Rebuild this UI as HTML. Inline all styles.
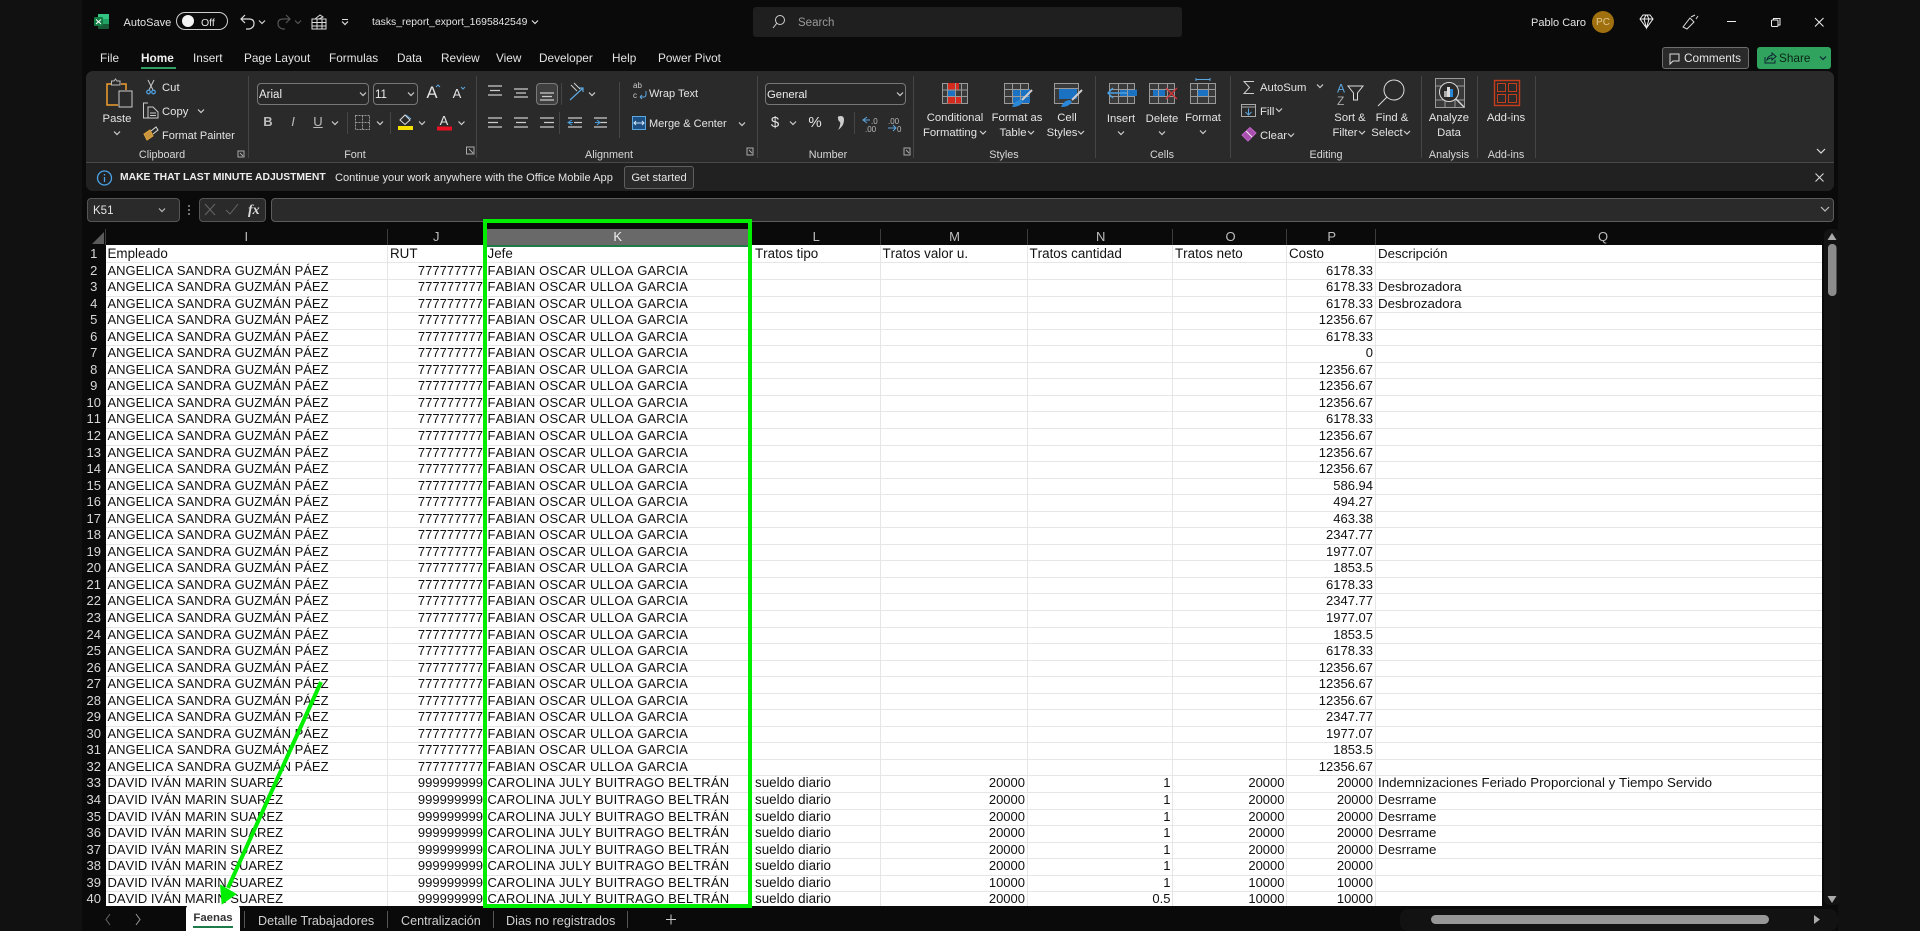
<!DOCTYPE html>
<html lang="en"><head><meta charset="utf-8"><title>tasks_report_export_1695842549 - Excel</title>
<style>
*{box-sizing:border-box}
html,body{margin:0;padding:0;width:1920px;height:931px;overflow:hidden;background:#111;font-family:"Liberation Sans",sans-serif}
#w{position:absolute;left:82px;top:0;width:1756px;height:931px;background:#0a0a0a}
.b{position:absolute}
.t{position:absolute;white-space:nowrap;font-size:11.3px;line-height:14px;color:#e4e4e4}
.c{transform:translateX(-50%)}
.m{font-size:11.8px;color:#e4e4e4}
.l{font-size:10.8px;color:#d8d8d8;top:148px}
.sel{background:#282828;border:1px solid #777;border-radius:4px}
#g{position:absolute;left:82px;top:228.7px;width:1740px;overflow:hidden;font-kerning:none}
#hd,.r{display:grid;grid-template-columns:23.5px 282.5px 97.5px 265.5px 129.5px 147px 145.5px 114px 88.5px 454px}
#hd{height:16.3px;background:#0a0a0a}
#hd span{font-size:13px;line-height:16px;text-align:center;color:#bdbdbd;border-right:1px solid #3c3c3c}
#hd span:nth-child(n+5){padding-left:2px}
#hd span:nth-child(4){background:#696969;color:#eee;border-bottom:2px solid #1f7a4a}
.r{height:16.55px;background:#fff}
.r span{font-size:13px;line-height:17.5px;color:#111;padding:0 2px;white-space:nowrap;border-right:1px solid #e6e6e6;border-bottom:1px solid #e6e6e6;overflow:visible}
.r span:nth-child(1){background:#0a0a0a;color:#d8d8d8;text-align:center;padding:0;border:0}
.r span:nth-child(3),.r span:nth-child(6),.r span:nth-child(7),.r span:nth-child(8),.r span:nth-child(9){text-align:right;padding-right:1.5px}
.r span:nth-child(4){letter-spacing:.16px}
.r span:nth-child(5){padding-left:4px;font-size:13.4px}
.r span:nth-child(10){padding-left:2.5px;font-size:13.3px}
.h span{font-size:13.4px}
.h span:nth-child(1){font-size:13px}
.h span:nth-child(4){letter-spacing:0}
.h span:nth-child(3),.h span:nth-child(6),.h span:nth-child(7),.h span:nth-child(8),.h span:nth-child(9){text-align:left;padding-left:2px;font-size:13.4px}
#ov{position:absolute;left:0;top:0;width:1920px;height:931px;pointer-events:none}
</style></head><body>
<div id="w"></div>

<div class="b" style="left:86px;top:71px;width:1748px;height:120px;background:#2a2a2a;border-radius:7px"></div>
<div class="b" style="left:86px;top:162px;width:1748px;height:29px;background:#212121;border-top:1.5px solid #484848;border-radius:0 0 7px 7px"></div>
<div class="b" style="left:753px;top:7px;width:429px;height:30px;background:#1f1f1f;border-radius:3px"></div>
<div class="b" style="left:176px;top:12px;width:52px;height:18px;border:1px solid #cfcfcf;border-radius:9px"></div>
<div class="b" style="left:182px;top:15px;width:12px;height:12px;background:#f4f4f4;border-radius:50%"></div>
<div class="b" style="left:1592px;top:11px;width:22px;height:22px;background:#a0700f;border-radius:50%"></div>
<div class="b" style="left:1662px;top:47px;width:87px;height:22px;background:#2a2a2a;border:1px solid #6e6e6e;border-radius:3px"></div>
<div class="b" style="left:1757px;top:47px;width:74px;height:22px;background:#30a45f;border-radius:3px"></div>
<div class="b" style="left:141px;top:67px;width:35px;height:2px;background:#2f9e63"></div>

<div class="b sel" style="left:257px;top:83px;width:112px;height:22px"></div>
<div class="b sel" style="left:373px;top:83px;width:45px;height:22px"></div>
<div class="b" style="left:536px;top:83px;width:21.500px;height:22px;background:#3f3f3f;border:1px solid #7a7a7a;border-radius:4px"></div>
<div class="b sel" style="left:765px;top:83px;width:141px;height:22px"></div>
<div class="b" style="left:624px;top:166px;width:70px;height:23px;background:#2a2a2a;border:1px solid #5f5f5f;border-radius:3px"></div>

<div class="b" style="left:87px;top:198px;width:93px;height:24px;background:#2a2a2a;border:1px solid #555;border-radius:4px"></div>
<div class="b" style="left:199px;top:198px;width:67px;height:24px;background:#2a2a2a;border:1px solid #555;border-radius:4px"></div>
<div class="b" style="left:271px;top:198px;width:1563px;height:24px;background:#2a2a2a;border:1px solid #5c5c5c;border-radius:4px"></div>

<!-- title bar text -->
<span class="t" style="left:123.500px;top:16px;font-size:11px">AutoSave</span>
<span class="t" style="left:201px;top:16px;font-size:10.5px">Off</span>
<span class="t" style="left:372px;top:16px;font-size:10.4px">tasks_report_export_1695842549</span>
<span class="t" style="left:798px;top:16px;color:#9a9a9a;font-size:11.5px">Search</span>
<span class="t" style="left:1531px;top:16px;font-size:11px">Pablo Caro</span>
<span class="t c" style="left:1603px;top:16px;font-size:10px;color:#e0c890">PC</span>

<!-- tabs -->
<span class="t m" style="left:100px;top:51px">File</span>
<span class="t m" style="left:141px;top:51px;font-weight:bold;color:#f0f0f0">Home</span>
<span class="t m" style="left:193px;top:51px">Insert</span>
<span class="t m" style="left:244px;top:51px">Page Layout</span>
<span class="t m" style="left:329px;top:51px">Formulas</span>
<span class="t m" style="left:397px;top:51px">Data</span>
<span class="t m" style="left:441px;top:51px">Review</span>
<span class="t m" style="left:496px;top:51px">View</span>
<span class="t m" style="left:539px;top:51px">Developer</span>
<span class="t m" style="left:612px;top:51px">Help</span>
<span class="t m" style="left:658px;top:51px">Power Pivot</span>
<span class="t m" style="left:1684px;top:51px">Comments</span>
<span class="t m" style="left:1779px;top:51px;color:#0c2415">Share</span>

<!-- clipboard -->
<span class="t c" style="left:117px;top:112px">Paste</span>
<span class="t" style="left:162px;top:81px">Cut</span>
<span class="t" style="left:162px;top:105px">Copy</span>
<span class="t" style="left:162px;top:129px;font-size:11px">Format Painter</span>
<span class="t c l" style="left:162px">Clipboard</span>
<!-- font -->
<span class="t" style="left:259px;top:88px;color:#eee;font-size:11.5px">Arial</span>
<span class="t" style="left:375px;top:88px;color:#eee;font-size:11.5px">11</span>
<span class="t c" style="left:432px;top:84px;font-size:16.500px;line-height:18px">A</span>
<span class="t c" style="left:457px;top:86px;font-size:13px;line-height:16px">A</span>
<span class="t c" style="left:268px;top:115px;font-size:13px;font-weight:bold;color:#bbb">B</span>
<span class="t c" style="left:293px;top:115px;font-size:13px;font-style:italic;color:#bbb">I</span>
<span class="t c" style="left:318px;top:115px;font-size:13px;text-decoration:underline;color:#bbb">U</span>
<span class="t c" style="left:444px;top:114px;font-size:13px">A</span>
<span class="t c l" style="left:355px">Font</span>
<!-- alignment -->
<span class="t" style="left:649px;top:87px;font-size:11px">Wrap Text</span>
<span class="t" style="left:649px;top:117px;font-size:11px">Merge &amp; Center</span>
<span class="t c l" style="left:609px">Alignment</span>
<!-- number -->
<span class="t" style="left:767px;top:88px;font-size:11.3px;color:#eee">General</span>
<span class="t c" style="left:775px;top:114px;font-size:15px;line-height:18px">$</span>
<span class="t c" style="left:815px;top:114px;font-size:15px;line-height:18px">%</span>
<span class="t c l" style="left:828px">Number</span>
<!-- styles -->
<span class="t c" style="left:955px;top:111px">Conditional</span>
<span class="t c" style="left:950px;top:126px">Formatting</span>
<span class="t c" style="left:1017px;top:111px">Format as</span>
<span class="t c" style="left:1013px;top:126px">Table</span>
<span class="t c" style="left:1067px;top:111px">Cell</span>
<span class="t c" style="left:1062px;top:126px">Styles</span>
<span class="t c l" style="left:1004px">Styles</span>
<!-- cells -->
<span class="t c" style="left:1121px;top:112px">Insert</span>
<span class="t c" style="left:1162px;top:112px">Delete</span>
<span class="t c" style="left:1203px;top:111px">Format</span>
<span class="t c l" style="left:1162px">Cells</span>
<!-- editing -->
<span class="t" style="left:1260px;top:81px">AutoSum</span>
<span class="t" style="left:1260px;top:105px">Fill</span>
<span class="t" style="left:1260px;top:129px">Clear</span>
<span class="t c" style="left:1350px;top:111px">Sort &amp;</span>
<span class="t c" style="left:1345px;top:126px">Filter</span>
<span class="t c" style="left:1392px;top:111px">Find &amp;</span>
<span class="t c" style="left:1387px;top:126px">Select</span>
<span class="t c l" style="left:1326px">Editing</span>
<span class="t c" style="left:1449px;top:111px">Analyze</span>
<span class="t c" style="left:1449px;top:126px">Data</span>
<span class="t c l" style="left:1449px">Analysis</span>
<span class="t c" style="left:1506px;top:111px">Add-ins</span>
<span class="t c l" style="left:1506px">Add-ins</span>

<!-- message bar -->
<span class="t" style="left:120px;top:171px;font-size:10.35px;font-weight:bold;color:#eee">MAKE THAT LAST MINUTE ADJUSTMENT</span>
<span class="t" style="left:335px;top:171px;font-size:11.1px">Continue your work anywhere with the Office Mobile App</span>
<span class="t c" style="left:659px;top:171px;font-size:11.2px">Get started</span>

<!-- formula bar -->
<span class="t" style="left:93px;top:204px;font-size:11.5px">K51</span>
<span class="t" style="left:248px;top:202px;font-size:14px;line-height:17px;font-family:'Liberation Serif',serif;font-style:italic;font-weight:bold;color:#ddd">fx</span>

<!-- grid -->
<div id="g">
<div id="hd"><span></span><span>I</span><span>J</span><span>K</span><span>L</span><span>M</span><span>N</span><span>O</span><span>P</span><span>Q</span></div>
<div class="r h"><span>1</span><span>Empleado</span><span>RUT</span><span>Jefe</span><span>Tratos tipo</span><span>Tratos valor u.</span><span>Tratos cantidad</span><span>Tratos neto</span><span>Costo</span><span>Descripción</span></div>
<div class="r"><span>2</span><span>ANGELICA SANDRA GUZMÁN PÁEZ</span><span>777777777</span><span>FABIAN OSCAR ULLOA GARCIA</span><span></span><span></span><span></span><span></span><span>6178.33</span><span></span></div>
<div class="r"><span>3</span><span>ANGELICA SANDRA GUZMÁN PÁEZ</span><span>777777777</span><span>FABIAN OSCAR ULLOA GARCIA</span><span></span><span></span><span></span><span></span><span>6178.33</span><span>Desbrozadora</span></div>
<div class="r"><span>4</span><span>ANGELICA SANDRA GUZMÁN PÁEZ</span><span>777777777</span><span>FABIAN OSCAR ULLOA GARCIA</span><span></span><span></span><span></span><span></span><span>6178.33</span><span>Desbrozadora</span></div>
<div class="r"><span>5</span><span>ANGELICA SANDRA GUZMÁN PÁEZ</span><span>777777777</span><span>FABIAN OSCAR ULLOA GARCIA</span><span></span><span></span><span></span><span></span><span>12356.67</span><span></span></div>
<div class="r"><span>6</span><span>ANGELICA SANDRA GUZMÁN PÁEZ</span><span>777777777</span><span>FABIAN OSCAR ULLOA GARCIA</span><span></span><span></span><span></span><span></span><span>6178.33</span><span></span></div>
<div class="r"><span>7</span><span>ANGELICA SANDRA GUZMÁN PÁEZ</span><span>777777777</span><span>FABIAN OSCAR ULLOA GARCIA</span><span></span><span></span><span></span><span></span><span>0</span><span></span></div>
<div class="r"><span>8</span><span>ANGELICA SANDRA GUZMÁN PÁEZ</span><span>777777777</span><span>FABIAN OSCAR ULLOA GARCIA</span><span></span><span></span><span></span><span></span><span>12356.67</span><span></span></div>
<div class="r"><span>9</span><span>ANGELICA SANDRA GUZMÁN PÁEZ</span><span>777777777</span><span>FABIAN OSCAR ULLOA GARCIA</span><span></span><span></span><span></span><span></span><span>12356.67</span><span></span></div>
<div class="r"><span>10</span><span>ANGELICA SANDRA GUZMÁN PÁEZ</span><span>777777777</span><span>FABIAN OSCAR ULLOA GARCIA</span><span></span><span></span><span></span><span></span><span>12356.67</span><span></span></div>
<div class="r"><span>11</span><span>ANGELICA SANDRA GUZMÁN PÁEZ</span><span>777777777</span><span>FABIAN OSCAR ULLOA GARCIA</span><span></span><span></span><span></span><span></span><span>6178.33</span><span></span></div>
<div class="r"><span>12</span><span>ANGELICA SANDRA GUZMÁN PÁEZ</span><span>777777777</span><span>FABIAN OSCAR ULLOA GARCIA</span><span></span><span></span><span></span><span></span><span>12356.67</span><span></span></div>
<div class="r"><span>13</span><span>ANGELICA SANDRA GUZMÁN PÁEZ</span><span>777777777</span><span>FABIAN OSCAR ULLOA GARCIA</span><span></span><span></span><span></span><span></span><span>12356.67</span><span></span></div>
<div class="r"><span>14</span><span>ANGELICA SANDRA GUZMÁN PÁEZ</span><span>777777777</span><span>FABIAN OSCAR ULLOA GARCIA</span><span></span><span></span><span></span><span></span><span>12356.67</span><span></span></div>
<div class="r"><span>15</span><span>ANGELICA SANDRA GUZMÁN PÁEZ</span><span>777777777</span><span>FABIAN OSCAR ULLOA GARCIA</span><span></span><span></span><span></span><span></span><span>586.94</span><span></span></div>
<div class="r"><span>16</span><span>ANGELICA SANDRA GUZMÁN PÁEZ</span><span>777777777</span><span>FABIAN OSCAR ULLOA GARCIA</span><span></span><span></span><span></span><span></span><span>494.27</span><span></span></div>
<div class="r"><span>17</span><span>ANGELICA SANDRA GUZMÁN PÁEZ</span><span>777777777</span><span>FABIAN OSCAR ULLOA GARCIA</span><span></span><span></span><span></span><span></span><span>463.38</span><span></span></div>
<div class="r"><span>18</span><span>ANGELICA SANDRA GUZMÁN PÁEZ</span><span>777777777</span><span>FABIAN OSCAR ULLOA GARCIA</span><span></span><span></span><span></span><span></span><span>2347.77</span><span></span></div>
<div class="r"><span>19</span><span>ANGELICA SANDRA GUZMÁN PÁEZ</span><span>777777777</span><span>FABIAN OSCAR ULLOA GARCIA</span><span></span><span></span><span></span><span></span><span>1977.07</span><span></span></div>
<div class="r"><span>20</span><span>ANGELICA SANDRA GUZMÁN PÁEZ</span><span>777777777</span><span>FABIAN OSCAR ULLOA GARCIA</span><span></span><span></span><span></span><span></span><span>1853.5</span><span></span></div>
<div class="r"><span>21</span><span>ANGELICA SANDRA GUZMÁN PÁEZ</span><span>777777777</span><span>FABIAN OSCAR ULLOA GARCIA</span><span></span><span></span><span></span><span></span><span>6178.33</span><span></span></div>
<div class="r"><span>22</span><span>ANGELICA SANDRA GUZMÁN PÁEZ</span><span>777777777</span><span>FABIAN OSCAR ULLOA GARCIA</span><span></span><span></span><span></span><span></span><span>2347.77</span><span></span></div>
<div class="r"><span>23</span><span>ANGELICA SANDRA GUZMÁN PÁEZ</span><span>777777777</span><span>FABIAN OSCAR ULLOA GARCIA</span><span></span><span></span><span></span><span></span><span>1977.07</span><span></span></div>
<div class="r"><span>24</span><span>ANGELICA SANDRA GUZMÁN PÁEZ</span><span>777777777</span><span>FABIAN OSCAR ULLOA GARCIA</span><span></span><span></span><span></span><span></span><span>1853.5</span><span></span></div>
<div class="r"><span>25</span><span>ANGELICA SANDRA GUZMÁN PÁEZ</span><span>777777777</span><span>FABIAN OSCAR ULLOA GARCIA</span><span></span><span></span><span></span><span></span><span>6178.33</span><span></span></div>
<div class="r"><span>26</span><span>ANGELICA SANDRA GUZMÁN PÁEZ</span><span>777777777</span><span>FABIAN OSCAR ULLOA GARCIA</span><span></span><span></span><span></span><span></span><span>12356.67</span><span></span></div>
<div class="r"><span>27</span><span>ANGELICA SANDRA GUZMÁN PÁEZ</span><span>777777777</span><span>FABIAN OSCAR ULLOA GARCIA</span><span></span><span></span><span></span><span></span><span>12356.67</span><span></span></div>
<div class="r"><span>28</span><span>ANGELICA SANDRA GUZMÁN PÁEZ</span><span>777777777</span><span>FABIAN OSCAR ULLOA GARCIA</span><span></span><span></span><span></span><span></span><span>12356.67</span><span></span></div>
<div class="r"><span>29</span><span>ANGELICA SANDRA GUZMÁN PÁEZ</span><span>777777777</span><span>FABIAN OSCAR ULLOA GARCIA</span><span></span><span></span><span></span><span></span><span>2347.77</span><span></span></div>
<div class="r"><span>30</span><span>ANGELICA SANDRA GUZMÁN PÁEZ</span><span>777777777</span><span>FABIAN OSCAR ULLOA GARCIA</span><span></span><span></span><span></span><span></span><span>1977.07</span><span></span></div>
<div class="r"><span>31</span><span>ANGELICA SANDRA GUZMÁN PÁEZ</span><span>777777777</span><span>FABIAN OSCAR ULLOA GARCIA</span><span></span><span></span><span></span><span></span><span>1853.5</span><span></span></div>
<div class="r"><span>32</span><span>ANGELICA SANDRA GUZMÁN PÁEZ</span><span>777777777</span><span>FABIAN OSCAR ULLOA GARCIA</span><span></span><span></span><span></span><span></span><span>12356.67</span><span></span></div>
<div class="r"><span>33</span><span>DAVID IVÁN MARIN SUAREZ</span><span>999999999</span><span>CAROLINA JULY BUITRAGO BELTRÁN</span><span>sueldo diario</span><span>20000</span><span>1</span><span>20000</span><span>20000</span><span>Indemnizaciones Feriado Proporcional y Tiempo Servido</span></div>
<div class="r"><span>34</span><span>DAVID IVÁN MARIN SUAREZ</span><span>999999999</span><span>CAROLINA JULY BUITRAGO BELTRÁN</span><span>sueldo diario</span><span>20000</span><span>1</span><span>20000</span><span>20000</span><span>Desrrame</span></div>
<div class="r"><span>35</span><span>DAVID IVÁN MARIN SUAREZ</span><span>999999999</span><span>CAROLINA JULY BUITRAGO BELTRÁN</span><span>sueldo diario</span><span>20000</span><span>1</span><span>20000</span><span>20000</span><span>Desrrame</span></div>
<div class="r"><span>36</span><span>DAVID IVÁN MARIN SUAREZ</span><span>999999999</span><span>CAROLINA JULY BUITRAGO BELTRÁN</span><span>sueldo diario</span><span>20000</span><span>1</span><span>20000</span><span>20000</span><span>Desrrame</span></div>
<div class="r"><span>37</span><span>DAVID IVÁN MARIN SUAREZ</span><span>999999999</span><span>CAROLINA JULY BUITRAGO BELTRÁN</span><span>sueldo diario</span><span>20000</span><span>1</span><span>20000</span><span>20000</span><span>Desrrame</span></div>
<div class="r"><span>38</span><span>DAVID IVÁN MARIN SUAREZ</span><span>999999999</span><span>CAROLINA JULY BUITRAGO BELTRÁN</span><span>sueldo diario</span><span>20000</span><span>1</span><span>20000</span><span>20000</span><span></span></div>
<div class="r"><span>39</span><span>DAVID IVÁN MARIN SUAREZ</span><span>999999999</span><span>CAROLINA JULY BUITRAGO BELTRÁN</span><span>sueldo diario</span><span>10000</span><span>1</span><span>10000</span><span>10000</span><span></span></div>
<div class="r"><span>40</span><span>DAVID IVÁN MARIN SUAREZ</span><span>999999999</span><span>CAROLINA JULY BUITRAGO BELTRÁN</span><span>sueldo diario</span><span>20000</span><span>0.5</span><span>10000</span><span>10000</span><span></span></div>
</div>

<!-- sheet tab bar -->
<div class="b" style="left:82px;top:905.5px;width:1756px;height:25.5px;background:#0a0a0a"></div>
<div class="b" style="left:1400px;top:909px;width:438px;height:22px;background:#121212;border-radius:8px"></div>
<div class="b" style="left:186px;top:905px;width:54px;height:26px;background:#fff;border-radius:4px 4px 0 0"></div>
<div class="b" style="left:193px;top:926px;width:40px;height:2px;background:#1f7a4a"></div>
<span class="t c" style="left:213px;top:911px;font-size:11.4px;font-weight:bold;color:#333">Faenas</span>
<span class="t" style="left:258px;top:914px;font-size:12.6px;color:#d0d0d0">Detalle Trabajadores</span>
<span class="t" style="left:401px;top:914px;font-size:12.6px;color:#d0d0d0">Centralización</span>
<span class="t" style="left:506px;top:914px;font-size:12.7px;color:#d0d0d0">Dias no registrados</span>

<svg id="ov" viewBox="0 0 1920 931" xmlns="http://www.w3.org/2000/svg" fill="none" stroke="#cfcfcf" stroke-width="1">
<defs><path id="c" d="M-3-1.5 0 1.5 3-1.5" stroke-width="1.2"/></defs>
<!-- excel logo -->
<rect x="98" y="14" width="11" height="15" rx="1" fill="#185c37" stroke="none"/><rect x="98" y="14" width="11" height="5" fill="#33c481" stroke="none"/><rect x="98" y="19" width="11" height="5" fill="#21a366" stroke="none"/>
<rect x="94" y="17" width="9" height="9" rx="1" fill="#107c41" stroke="none"/><path d="M96 19.500 101 24M101 19.500 96 24" stroke="#fff"/>
<!-- QAT -->
<path d="M245 15 241 19 245 23M241 19H249Q254 19 254 23.500T249 29H246" stroke="#ddd" stroke-width="1.2"/>
<use href="#c" x="262" y="22"/>
<path d="M286 15 290 19 286 23M290 19H283Q278 19 278 23.500T283 29H285" stroke="#555" stroke-width="1.2"/>
<use href="#c" x="298" y="22" stroke="#555"/>
<path d="M312 19H326V29H312ZM312 22.500H326M312 26H326M317 19V29M322 19V29" stroke="#ddd"/>
<path d="M315 19 320 15 323 17 319 19" stroke="#ddd"/>
<path d="M342 19.500H348" stroke="#ddd"/><use href="#c" x="345" y="23" stroke="#ddd"/>
<use href="#c" x="535" y="22" stroke="#ddd"/>
<!-- search -->
<circle cx="780" cy="20" r="4.500"/><path d="M776.600 23.400 773 28"/>
<!-- right icons -->
<path d="M1640 19 1643 15H1650L1653 19 1646.500 28ZM1640 19H1653M1644 19 1646.500 28 1649 19 1647 15M1646 15 1644 19" stroke="#eee"/>
<path d="M1683 27 1690 18 1694 22 1687 29ZM1691 17 1695 15M1696 19 1698 16" stroke="#ddd"/>
<path d="M1727 21.500H1736" stroke="#eee"/>
<rect x="1771.500" y="20" width="6.500" height="6.500" rx="1" stroke="#eee"/><path d="M1773.500 20V18.500H1780V25H1778" stroke="#eee"/>
<path d="M1815 18 1823.500 26.500M1823.500 18 1815 26.500" stroke="#eee"/>
<!-- comments / share icons -->
<path d="M1670 54H1679V61H1673L1670 64Z" stroke="#ddd"/>
<path d="M1765 57V63H1775V60M1767 60Q1768 55.500 1772 55.500V53L1776 56.500 1772 60V58Q1769 58 1767 60Z" stroke="#123"/>
<use href="#c" x="1823" y="58" stroke="#123"/>

<!-- clipboard icons -->
<path d="M111 84H107V105H118M121 84H126V90" stroke="#f0a030" stroke-width="1.500"/>
<path d="M111.500 85V81H114L115.500 79 117 81H120V85Z" stroke="#bbb"/>
<rect x="119" y="91" width="13" height="16" stroke="#ccc" fill="#2a2a2a"/>
<use href="#c" x="117" y="133"/>
<path d="M148 80 153 90M154 80 149 90" stroke="#ccc"/><circle cx="148.500" cy="92" r="1.800" stroke="#4d9bd8" stroke-width="1.300"/><circle cx="153.500" cy="92" r="1.800" stroke="#4d9bd8" stroke-width="1.300"/>
<path d="M148 103H143.500V118H148M148 107H153L158 112V118H148ZM150 113H156M150 115.500H156" stroke="#ccc"/>
<use href="#c" x="201" y="111"/>
<path d="M144 134 150 130 153 136 147 140Z" stroke="#e2a33a" fill="#c89440"/><path d="M151 131 156 127 158 130 153 134" stroke="#ddd"/>
<path d="M238 151H244V157H238ZM240 153 243 156" stroke="#aaa"/>
<!-- separators -->
<g stroke="#454545">
<path d="M248.500 76V158M476.500 76V158M757.500 76V158M913.500 76V158M1095.500 76V158M1230.500 76V158M1421.500 76V158M1477.500 76V158M1535.500 76V158"/>
<path d="M347.500 112V134M390.500 112V134M561.500 83V105M559.500 112V134M619.500 82V138M854.500 112V134"/>
</g>
<!-- font -->
<use href="#c" x="363" y="94"/><use href="#c" x="411" y="94"/>
<path d="M436 87 438 85 440 87" stroke="#5ba7e0"/><path d="M461 87 463 89 465 87" stroke="#5ba7e0"/>
<use href="#c" x="335" y="123"/><use href="#c" x="380" y="123"/><use href="#c" x="422" y="123"/><use href="#c" x="461.500" y="123"/>
<path d="M355.500 115.500H369.500V129.500H355.500ZM362.500 115.500V129.500M355.500 122.500H369.500" stroke="#999" stroke-dasharray="2 1"/>
<path d="M400 120 405 115 410 120 405 124.500Z" stroke="#ddd"/><path d="M406 115 411 119" stroke="#5ba7e0"/>
<path d="M398 128H413" stroke="#f6e000" stroke-width="4"/>
<path d="M437 128.500H452" stroke="#e81123" stroke-width="4"/>
<path d="M466.500 148H474V155H466.500ZM469 150 473 154" stroke="#aaa" transform="translate(0 -1)"/>
<!-- alignment -->
<g stroke="#ccc" stroke-width="1.200">
<path d="M488 86H502M490 90.500H500M488 95H502M514 89H528M516 93H526M514 97H528M540 93H554M542 96.500H552M540 100H554"/>
<path d="M488 118H502M488 122.500H498M488 127H502M514 118H528M516 122.500H526M514 127H528M540 118H554M544 122.500H554M540 127H554"/>
</g>
<path d="M570 100 583 88M579 88H583V92" stroke="#5ba7e0" stroke-width="1.200"/><path d="M571 85 577 91M574 83 580 89" stroke="#ccc"/>
<use href="#c" x="592" y="94"/>
<path d="M568 118H582M574 122.500H582M568 127H582" stroke="#ccc" stroke-width="1.200"/><path d="M572 120 568 122.500 572 125M568 122.500H573" stroke="#4a9fe0"/>
<path d="M594 118H607M594 127H607M600 122.500H607" stroke="#ccc" stroke-width="1.200"/><path d="M595 122.500H600M597 120 600 122.500 597 125" stroke="#4a9fe0"/>
<text x="633" y="88" font-family="Liberation Sans,sans-serif" font-size="8" fill="#ccc" stroke="none">ab</text>
<text x="633" y="98" font-family="Liberation Sans,sans-serif" font-size="8" fill="#ccc" stroke="none">c</text>
<path d="M640 97H644Q646 97 646 94V91M640 97 642 95M640 97 642 99" stroke="#5ba7e0"/>
<rect x="632.500" y="116.500" width="13" height="13" fill="#1e4f82" stroke="#5ba7e0"/><path d="M634 123H644M636 121 634 123 636 125M642 121 644 123 642 125" stroke="#cfe6fa"/>
<use href="#c" x="742" y="124"/>
<path d="M747 148H753V155H747ZM749 150 752 153" stroke="#aaa"/>
<use href="#c" x="900" y="94"/>
<use href="#c" x="793" y="123"/>
<path d="M838 118Q837 116 841 116 844 116 844 120 844 126 838 130 841 125 840 122 838 121 838 118Z" fill="#ccc" stroke="none"/>
<path d="M867 117 863 120 867 123M863 120H870" stroke="#5ba7e0"/>
<text x="871" y="124" font-family="Liberation Sans,sans-serif" font-size="8" fill="#bbb" stroke="none">.0</text>
<text x="865" y="132" font-family="Liberation Sans,sans-serif" font-size="8" fill="#bbb" stroke="none">.00</text>
<text x="888" y="124" font-family="Liberation Sans,sans-serif" font-size="8" fill="#bbb" stroke="none">.00</text>
<path d="M888 128H896M893 125 896 128 893 131" stroke="#5ba7e0"/>
<text x="897" y="132" font-family="Liberation Sans,sans-serif" font-size="8" fill="#bbb" stroke="none">0</text>
<path d="M904 148H910V155H904ZM906 150 909 153" stroke="#aaa"/>
<!-- styles icons -->
<g stroke="#9a9a9a">
<rect x="942.500" y="83.500" width="25" height="20" fill="#3a3a3a"/><rect x="947" y="83" width="12" height="6.500" fill="#d52b1e" stroke="none"/><rect x="947" y="90" width="8" height="6" fill="#1b71c2" stroke="none"/><rect x="947" y="96.500" width="14" height="7" fill="#d52b1e" stroke="none"/>
<path d="M942 90H968M942 96.500H968M947.500 83V103M955.500 83V103M961.500 83V103"/>
<rect x="1004.500" y="83.500" width="24" height="20" fill="#3a3a3a"/><rect x="1013" y="89" width="17" height="14" fill="#1b71c2" stroke="none"/>
<path d="M1004 89.500H1029M1004 96.500H1029M1012.500 83V103M1020.500 83V103"/>
<rect x="1054.500" y="83.500" width="24" height="20" fill="#3a3a3a"/><rect x="1059" y="88" width="18" height="11" fill="#1b71c2" stroke="none"/>
<path d="M1054 88.500H1079"/>
</g>
<path d="M1032 90 1022 100" stroke="#ccc" stroke-width="2"/><path d="M1012 107Q1015 100 1021 100L1023 102Q1020 107 1012 107Z" fill="#2b88d8" stroke="none"/>
<path d="M1082 90 1072 100" stroke="#ccc" stroke-width="2"/><path d="M1061 107Q1064 100 1070 100L1072 102Q1069 107 1061 107Z" fill="#2b88d8" stroke="none"/>
<use href="#c" x="983" y="132.500"/><use href="#c" x="1031" y="132.500"/><use href="#c" x="1081" y="132.500"/>
<!-- cells icons -->
<g stroke="#9a9a9a">
<rect x="1109.500" y="83.500" width="25" height="20" fill="#3a3a3a"/><rect x="1120" y="89.500" width="17" height="6.500" fill="#1b71c2" stroke="none"/><path d="M1109 89.500H1135M1109 96.500H1135M1118.500 83V103M1127.500 83V103"/>
<rect x="1149.500" y="83.500" width="25" height="20" fill="#3a3a3a"/><rect x="1153" y="89.500" width="12" height="6.500" fill="#1b71c2" stroke="none"/><path d="M1149 89.500H1175M1149 96.500H1175M1158.500 83V103M1167.500 83V103"/>
<rect x="1190.500" y="83.500" width="25" height="20" fill="#3a3a3a"/><rect x="1197" y="89.500" width="12" height="6.500" fill="#1b71c2" stroke="none"/><path d="M1190 89.500H1216M1190 96.500H1216M1197.500 83V103M1208.500 83V103"/>
</g>
<path d="M1127 93H1109M1113 88 1108 93 1113 98" stroke="#4a9fe0" stroke-width="1.400"/>
<path d="M1166 88 1177 99M1177 88 1166 99" stroke="#d13438" stroke-width="1.400"/>
<path d="M1196 79.500H1210M1196 78V81M1210 78V81" stroke="#5ba7e0"/>
<use href="#c" x="1121" y="133"/><use href="#c" x="1162" y="133"/><use href="#c" x="1203" y="132"/>
<!-- editing -->
<path d="M1254 81.500H1244L1249.500 87.500 1244 93.500H1254" stroke="#ccc"/>
<use href="#c" x="1320" y="86"/>
<rect x="1241.500" y="104.500" width="14" height="12" stroke="#aaa"/><path d="M1241 107H1256" stroke="#aaa"/><path d="M1248.500 108.500V114.500M1245.500 112 1248.500 115 1251.500 112" stroke="#5ba7e0"/>
<use href="#c" x="1279" y="110"/>
<path d="M1242 135 1250 127.500 1256 133 1248 141Z" fill="#a84fb0" stroke="#c264c9"/><path d="M1246 131 1252 137" stroke="#eee"/>
<use href="#c" x="1291" y="135"/>
<text x="1337" y="92.500" font-family="Liberation Sans,sans-serif" font-size="12" fill="#5ba7e0" stroke="none">A</text>
<text x="1337" y="105" font-family="Liberation Sans,sans-serif" font-size="12" fill="#aaa" stroke="none">Z</text>
<path d="M1348 86H1363L1357.500 93V100H1353.500V93Z" stroke="#ddd"/>
<circle cx="1394" cy="90" r="10" stroke="#ddd"/><path d="M1387 97 1378 106" stroke="#ddd"/>
<use href="#c" x="1362" y="132.500"/><use href="#c" x="1407" y="132.500"/>
<!-- analyze -->
<rect x="1435.500" y="78.500" width="29" height="29" stroke="#9a9a9a" fill="#3a3a3a"/><path d="M1435 86H1465M1435 100H1465M1445 100V108M1455 100V108" stroke="#9a9a9a"/>
<circle cx="1449" cy="92" r="9.500" stroke="#d8d8d8" fill="#2a2a2a"/><path d="M1456 99 1464 107" stroke="#d8d8d8" stroke-width="1.400"/>
<rect x="1444" y="91" width="3" height="6" fill="#aaa" stroke="none"/><rect x="1447" y="87" width="3" height="10" fill="#ddd" stroke="none"/><rect x="1450" y="89" width="3" height="8" fill="#2b88d8" stroke="none"/>
<!-- addins -->
<rect x="1494.500" y="80.500" width="25" height="25" stroke="#c43e1c" stroke-width="1.400"/>
<rect x="1497.500" y="83.500" width="8" height="8" stroke="#c43e1c"/><rect x="1508.500" y="83.500" width="8" height="8" stroke="#c43e1c"/><rect x="1497.500" y="94.500" width="8" height="8" stroke="#c43e1c"/><rect x="1508.500" y="94.500" width="8" height="8" stroke="#c43e1c"/>
<path d="M1817 149 1821 153 1825 149" stroke="#ddd" stroke-width="1.200"/>
<!-- info / close -->
<circle cx="104.500" cy="178" r="7" stroke="#4aa3e8" stroke-width="1.300"/><path d="M104.500 177V182M104.500 174V175.500" stroke="#4aa3e8" stroke-width="1.300"/>
<path d="M1815.500 173.500 1823.500 181.500M1823.500 173.500 1815.500 181.500" stroke="#ddd"/>
<!-- formula bar -->
<use href="#c" x="162" y="210" stroke="#bbb"/>
<circle cx="189" cy="206" r=".9" fill="#bbb" stroke="none"/><circle cx="189" cy="210" r=".9" fill="#bbb" stroke="none"/><circle cx="189" cy="214" r=".9" fill="#bbb" stroke="none"/>
<path d="M205 204 215 215M215 204 205 215" stroke="#666"/><path d="M226 210 230 214 238 204" stroke="#666"/>
<path d="M1821 207 1825 211 1829 207" stroke="#bbb" stroke-width="1.200"/>
<!-- corner triangle -->
<path d="M104 232V244H92Z" fill="#5a5a5a" stroke="none"/>
<!-- scrollbars -->
<rect x="1824" y="229" width="16" height="676" rx="6" fill="#131313" stroke="none"/>
<path d="M1832 233 1836.500 240H1827.500Z" fill="#aaa" stroke="none"/>
<rect x="1828" y="244" width="8.500" height="52" rx="4" fill="#8c8c8c" stroke="none"/>
<path d="M1832 903 1836.500 896H1827.500Z" fill="#aaa" stroke="none"/>
<rect x="1431" y="915" width="338" height="9" rx="4.500" fill="#979797" stroke="none"/>
<path d="M1820 919.500 1814 915V924Z" fill="#aaa" stroke="none"/>
<!-- tab bar marks -->
<path d="M110 914 106 919.500 110 925" stroke="#666"/><path d="M136 914 140 919.500 136 925" stroke="#999"/>
<path d="M244.500 911V928M387.500 911V928M493.500 911V928M627.500 911V928" stroke="#555"/>
<path d="M666 919.500H676M671 914.500V924.500" stroke="#ccc"/>
<!-- annotations -->
<rect x="485" y="221" width="265" height="685" stroke="#00ee00" stroke-width="4"/>
<path d="M321 682 228 888" stroke="#00ee00" stroke-width="4"/>
<path d="M222 904 220.500 885 236 894Z" fill="#00ee00" stroke="#00ee00" stroke-width=".8"/>
</svg>
</body></html>
